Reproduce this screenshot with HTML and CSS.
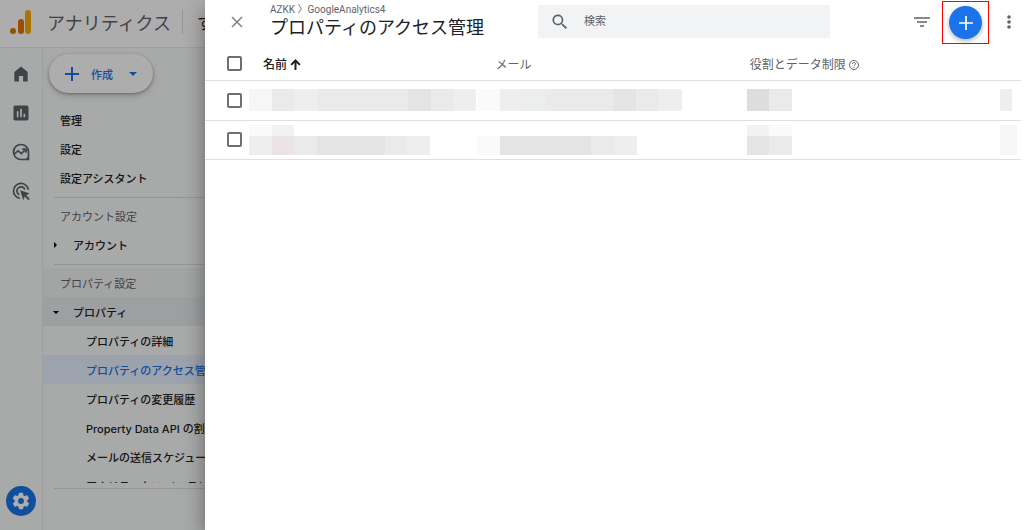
FILE: index.html
```
<!DOCTYPE html>
<html lang="ja">
<head>
    <meta charset="UTF-8">
    <meta name="viewport" content="width=device-width, initial-scale=1.0">
    <title>プロパティのアクセス管理</title>
    <link rel="stylesheet" href="styles.css">
</head>
<body>
    <div class="app">
        <header class="app-header">
            <svg class="logo" width="22" height="26" viewBox="0 0 22 26">
                <rect x="15" y="1" width="6" height="24" rx="3" fill="#f9ab00"/>
                <rect x="8" y="10" width="6" height="15" rx="3" fill="#e37400"/>
                <circle cx="3" cy="22" r="3" fill="#e37400"/>
            </svg>
            <span class="app-name">アナリティクス</span>
            <span class="account">すべてのアカウント</span>
        </header>
        <div class="app-body">
            <nav class="rail">
                <a href="#" aria-label="ホーム"><svg width="20" height="20" viewBox="0 0 24 24"><path d="M4 21V9.500L12 3l8 6.500V21h-5.500v-6.500h-5V21z"/></svg></a>
                <a href="#" aria-label="レポート"><svg width="20" height="20" viewBox="0 0 24 24"><path d="M19 3H5a2 2 0 0 0-2 2v14c0 1.100.9 2 2 2h14a2 2 0 0 0 2-2V5a2 2 0 0 0-2-2zM9 17H7v-7h2v7zm4 0h-2V7h2v10zm4 0h-2v-4h2v4z"/></svg></a>
                <a href="#" aria-label="探索"><svg width="20" height="20" viewBox="0 0 24 24"><path d="M12 3a9 9 0 1 0 0 18h9v-9a9 9 0 0 0-9-9z" class="line"/><path d="M4 14.500l4.500-4 4 3.500 5-5M13.500 8.500H18V13" class="line"/><path d="M17 21l4-4v4z"/></svg></a>
                <a href="#" aria-label="広告"><svg width="20" height="20" viewBox="0 0 24 24"><path d="M10.500 20.800A9 9 0 1 1 20.900 10.500M10 16.500A5 5 0 1 1 16.700 10" class="line"/><path d="M11 11l11.500 4-4.300 2 4.300 4.300-1.700 1.700-4.300-4.300-1.800 4.300z"/></svg></a>
                <a href="#" class="admin" aria-label="管理"><svg width="20" height="20" viewBox="0 0 24 24"><path d="M19.400 13c0-.3.1-.6.1-1s0-.7-.1-1l2.100-1.600c.2-.2.300-.4.100-.7l-2-3.400c-.1-.2-.4-.3-.6-.2l-2.500 1c-.5-.4-1.100-.7-1.700-1l-.4-2.600c0-.3-.2-.5-.5-.5h-4c-.2 0-.5.2-.5.400l-.4 2.700c-.6.2-1.100.6-1.700 1l-2.400-1c-.3-.1-.5 0-.7.2l-2 3.400c-.1.300 0 .5.200.7L4.500 11c0 .3-.1.6-.1 1s0 .7.1 1l-2.100 1.600c-.2.200-.3.400-.1.700l2 3.400c.1.200.3.300.6.200l2.500-1c.5.400 1.100.7 1.700 1l.4 2.600c0 .3.200.5.500.5h4c.2 0 .5-.2.500-.4l.4-2.700c.6-.2 1.100-.6 1.700-1l2.400 1c.3.1.5 0 .7-.2l2-3.400c.1-.3.1-.5-.2-.7L19.400 13zM12 15.500a3.500 3.500 0 1 1 0-7 3.500 3.500 0 0 1 0 7z"/></svg></a>
            </nav>
            <nav class="side">
                <button type="button" class="create-btn">
                    <svg width="14" height="14" viewBox="0 0 14 14"><path d="M7 0v14M0 7h14" stroke="currentColor" stroke-width="2"/></svg>
                    <span>作成</span>
                    <svg class="caret" width="8" height="4" viewBox="0 0 8 4"><path d="M0 0h8L4 4z" fill="currentColor"/></svg>
                </button>
                <a href="#" class="item">管理</a>
                <a href="#" class="item">設定</a>
                <a href="#" class="item">設定アシスタント</a>
                <hr>
                <div class="item heading">アカウント設定</div>
                <a href="#" class="item group"><svg width="8" height="8" viewBox="0 0 8 8"><path d="M2 1l3 3-3 3z"/></svg>アカウント</a>
                <hr>
                <div class="item heading shaded">プロパティ設定</div>
                <a href="#" class="item group open"><svg width="8" height="8" viewBox="0 0 8 8"><path d="M1 3h6L4 6z"/></svg>プロパティ</a>
                <div class="sub-list">
                    <a href="#" class="item sub">プロパティの詳細</a>
                    <a href="#" class="item sub selected">プロパティのアクセス管理</a>
                    <a href="#" class="item sub">プロパティの変更履歴</a>
                    <a href="#" class="item sub">Property Data API の割り当て履歴</a>
                    <a href="#" class="item sub">メールの送信スケジュール</a>
                    <a href="#" class="item sub">アナリティクス インテリジェンスの検索履歴</a>
                </div>
                <hr>
            </nav>
        </div>
    </div>
    <div class="scrim"></div>

    <main class="drawer">
        <header class="drawer-header">
            <button type="button" class="icon-btn close-btn" aria-label="閉じる">
                <svg width="12" height="12" viewBox="0 0 12 12"><path d="M1 1l10 10M11 1L1 11" stroke="currentColor" stroke-width="1.600"/></svg>
            </button>
            <div class="title">
                <div class="breadcrumb">AZKK 〉GoogleAnalytics4</div>
                <h1>プロパティのアクセス管理</h1>
            </div>
            <label class="search">
                <svg width="20" height="20" viewBox="0 0 24 24"><path fill="currentColor" d="M15.500 14h-.8l-.3-.3A6.500 6.500 0 1 0 13.700 14.400l.3.3v.8l5 5 1.500-1.500-5-5zm-6 0a4.500 4.500 0 1 1 0-9 4.500 4.500 0 0 1 0 9z"/></svg>
                <input type="text" placeholder="検索" aria-label="検索">
            </label>
            <div class="actions">
                <button type="button" class="icon-btn" aria-label="フィルタ">
                    <svg width="16" height="12" viewBox="0 0 16 12"><path d="M0 2h16M3 6h10M6 10h4" stroke="currentColor" stroke-width="1.500"/></svg>
                </button>
                <div class="highlight">
                    <button type="button" class="add-btn" aria-label="追加">
                        <svg width="14" height="14" viewBox="0 0 14 14"><path d="M7 0v14M0 7h14" stroke="currentColor" stroke-width="1.700"/></svg>
                    </button>
                </div>
                <button type="button" class="icon-btn more-btn" aria-label="その他">
                    <svg width="4" height="14" viewBox="0 0 4 14" fill="currentColor"><circle cx="2" cy="2" r="1.800"/><circle cx="2" cy="7" r="1.800"/><circle cx="2" cy="12" r="1.800"/></svg>
                </button>
            </div>
        </header>
        <table>
            <thead>
                <tr>
                    <th class="col-check"><input type="checkbox" aria-label="すべて選択"></th>
                    <th class="col-name">名前 <svg width="11" height="11" viewBox="0 0 10 10"><path d="M5 10V1.500M1 5.300l4-4 4 4" fill="none" stroke="currentColor" stroke-width="1.800"/></svg></th>
                    <th class="col-mail">メール</th>
                    <th class="col-role">役割とデータ制限 <svg width="10" height="10" viewBox="0 0 10 10" fill="none" stroke="currentColor"><circle cx="5" cy="5" r="4.500"/><path d="M3.500 4C3.500 2 6.500 2 6.500 3.900 6.500 5 5 5 5 6.200M5 7v1"/></svg></th>
                    <th class="col-menu"></th>
                </tr>
            </thead>
            <tbody>
                <tr>
                    <td class="col-check"><input type="checkbox" aria-label="選択"></td>
                    <td>
                        <div class="mask m10"><i class="g1"></i><i class="g4"></i><i class="g3"></i><i class="g4"></i><i class="g4"></i><i class="g4"></i><i class="g4"></i><i class="g5"></i><i class="g4"></i><i class="g3"></i></div>
                    </td>
                    <td>
                        <div class="mask m9"><i class="g0"></i><i class="g3"></i><i class="green"></i><i class="g4"></i><i class="g4"></i><i class="g4"></i><i class="g5"></i><i class="g4"></i><i class="g3"></i></div>
                    </td>
                    <td>
                        <div class="mask m2"><i class="g6"></i><i class="g4"></i></div>
                    </td>
                    <td>
                        <div class="mask half"><i class="g3"></i></div>
                    </td>
                </tr>
                <tr>
                    <td class="col-check"><input type="checkbox" aria-label="選択"></td>
                    <td>
                        <div class="mask m2 top"><i class="g0"></i><i class="g2"></i></div>
                        <div class="mask m8 low"><i class="g3"></i><i class="pink"></i><i class="g4"></i><i class="g5"></i><i class="g5"></i><i class="g5"></i><i class="g4"></i><i class="green"></i></div>
                    </td>
                    <td>
                        <div class="mask top"></div>
                        <div class="mask m7 low"><i class="g0"></i><i class="g5"></i><i class="g5"></i><i class="g5"></i><i class="g5"></i><i class="g4"></i><i class="g3"></i></div>
                    </td>
                    <td>
                        <div class="mask m2 top"><i class="g2"></i><i class="g0"></i></div>
                        <div class="mask m2 low"><i class="g5"></i><i class="g4"></i></div>
                    </td>
                    <td>
                        <div class="mask wide top"><i class="g1"></i></div>
                        <div class="mask wide low"><i class="g1"></i></div>
                    </td>
                </tr>
            </tbody>
        </table>
    </main>
</body>
</html>
```
FILE: styles.css
```
* {
    box-sizing: border-box;
}
body {
    margin: 0;
    height: 100vh;
    overflow: hidden;
    font-family: Roboto, "Noto Sans CJK JP", sans-serif;
    font-size: 12px;
    color: #202124;
    background: #fff;
}
a {
    color: inherit;
    text-decoration: none;
}
button {
    padding: 0;
    border: none;
    background: none;
    font-family: inherit;
    cursor: pointer;
}
svg {
    flex: none;
}

/* page behind the drawer */
.app {
    display: flex;
    flex-direction: column;
    height: 100%;
}
.app-header {
    display: flex;
    align-items: center;
    height: 48px;
    padding: 0 10px 4px;
    border-bottom: 1px solid #e8eaed;
    white-space: nowrap;
    color: #5f6368;
}
.app-name {
    margin-left: 15px;
    font-size: 18px;
}
.account {
    margin-left: 11px;
    padding-left: 14px;
    border-left: 1px solid #dadce0;
    font-size: 16px;
    color: #202124;
}
.app-body {
    display: flex;
    flex: 1;
    min-height: 0;
    background: #f8f9fa;
}
.rail {
    display: flex;
    flex-direction: column;
    align-items: center;
    gap: 19px;
    width: 43px;
    padding: 16px 1px 14px 0;
    border-right: 1px solid #e8eaed;
}
.rail a {
    display: flex;
}
.rail svg {
    fill: #5f6368;
}
.rail .line {
    fill: none;
    stroke: #5f6368;
    stroke-width: 2;
}
.rail .admin {
    margin-top: auto;
    padding: 5px;
    border-radius: 50%;
    background: #1a73e8;
}
.rail .admin svg {
    fill: #fff;
}
.side {
    width: 220px;
    font-family: Inter, "Noto Sans CJK JP", sans-serif;
}
.create-btn {
    display: flex;
    align-items: center;
    gap: 12px;
    height: 39px;
    margin: 6px 0 12px 6px;
    padding: 0 16px;
    border-radius: 20px;
    background: #fff;
    box-shadow: 0 1px 3px rgba(60, 64, 67, 0.4), 0 3px 6px rgba(60, 64, 67, 0.2);
    color: #1a73e8;
    font-size: 11px;
    font-weight: 500;
}
.caret {
    margin-left: 4px;
}
.item {
    display: flex;
    align-items: center;
    height: 29px;
    padding-left: 17px;
    font-size: 11px;
    font-weight: 500;
    white-space: nowrap;
}
.side hr {
    margin: 5px 0 3px 11px;
    border: none;
    border-top: 1px solid #dadce0;
}
.heading {
    color: #5f6368;
    font-weight: 400;
}
.shaded {
    background: #f1f3f4;
}
.group {
    gap: 13px;
    padding-left: 9px;
}
.open {
    background: #e8eaed;
}
.sub-list {
    height: 157px;
    overflow: hidden;
}
.sub {
    padding-left: 43px;
}
.selected {
    background: #e8f0fe;
    color: #1a73e8;
}
.scrim {
    position: absolute;
    inset: 0;
    background: rgba(0, 0, 0, 0.32);
}

/* drawer */
.drawer {
    position: absolute;
    top: 0;
    right: 0;
    bottom: 0;
    left: 205px;
    padding-right: 3px;
    background: #fff;
    box-shadow: 0 8px 20px rgba(0, 0, 0, 0.4);
}
.drawer-header {
    display: flex;
    align-items: flex-start;
    height: 47px;
    color: #5f6368;
}
.icon-btn {
    display: flex;
    align-items: center;
    justify-content: center;
    width: 24px;
    height: 43px;
    color: #5f6368;
}
.close-btn {
    margin: 0 20px;
    color: #80868b;
}
.title {
    flex: 1;
    padding: 4px 0 0 1px;
    white-space: nowrap;
}
.breadcrumb {
    font-size: 10px;
    line-height: 12px;
}
h1 {
    margin: 0;
    font-size: 18px;
    font-weight: 400;
    line-height: 24px;
    color: #202124;
}
.search {
    display: flex;
    align-items: center;
    gap: 14px;
    width: 292px;
    height: 33px;
    margin-top: 5px;
    padding: 0 12px;
    border-radius: 2px;
    background: #f1f3f4;
}
.search input {
    flex: 1;
    min-width: 0;
    padding: 0;
    border: none;
    outline: none;
    background: none;
    font-family: inherit;
    font-size: 11px;
}
.search input::placeholder {
    color: #5f6368;
}
.actions {
    display: flex;
    justify-content: flex-end;
    width: 191px;
}
.highlight {
    display: flex;
    align-items: center;
    justify-content: center;
    width: 47px;
    height: 43px;
    margin: 1px 8px 0;
    border: 1px solid #f00;
}
.add-btn {
    display: flex;
    align-items: center;
    justify-content: center;
    width: 33px;
    height: 33px;
    border-radius: 50%;
    background: #1a73e8;
    box-shadow: 0 2px 5px rgba(0, 0, 0, 0.3);
    color: #fff;
}
table {
    width: 100%;
    border-collapse: collapse;
    table-layout: fixed;
}
th, td {
    padding: 0;
    border-bottom: 1px solid #e0e0e0;
    text-align: left;
}
th {
    height: 33px;
    font-size: 12px;
    font-weight: 400;
    color: #5f6368;
}
td {
    height: 40px;
}
tr:last-child td {
    height: 39px;
}
th svg {
    vertical-align: -1px;
}
.col-check {
    width: 44px;
    padding-left: 22px;
}
.col-name {
    width: 28%;
    padding-left: 14px;
    font-weight: 500;
    color: #202124;
}
.col-mail {
    width: 33%;
    padding-left: 18px;
}
.col-role {
    width: 31%;
    padding-left: 3px;
}
input[type="checkbox"] {
    display: block;
    appearance: none;
    width: 15px;
    height: 15px;
    margin: 0;
    border: 2px solid #6b7076;
    border-radius: 2px;
    background: #fff;
}

/* masked user data */
.mask {
    display: flex;
    height: 22px;
}
.mask i {
    flex: 1;
}
.top {
    height: 11px;
}
.low {
    height: 19px;
}
.m10 {
    width: 227px;
}
.m9 {
    width: 204px;
}
.m8 {
    width: 181px;
}
.m7 {
    width: 159px;
}
.m2 {
    width: 45px;
}
.half {
    width: 12px;
}
.wide {
    width: 17px;
}
.g0 {
    background: #fafafa;
}
.g1 {
    background: #f6f6f6;
}
.g2 {
    background: #f3f2f2;
}
.g3 {
    background: #eeeeee;
}
.g4 {
    background: #eaeaea;
}
.g5 {
    background: #e4e4e4;
}
.g6 {
    background: #dddddd;
}
.green {
    background: #ebeeed;
}
.pink {
    background: #ebe3e5;
}
```
